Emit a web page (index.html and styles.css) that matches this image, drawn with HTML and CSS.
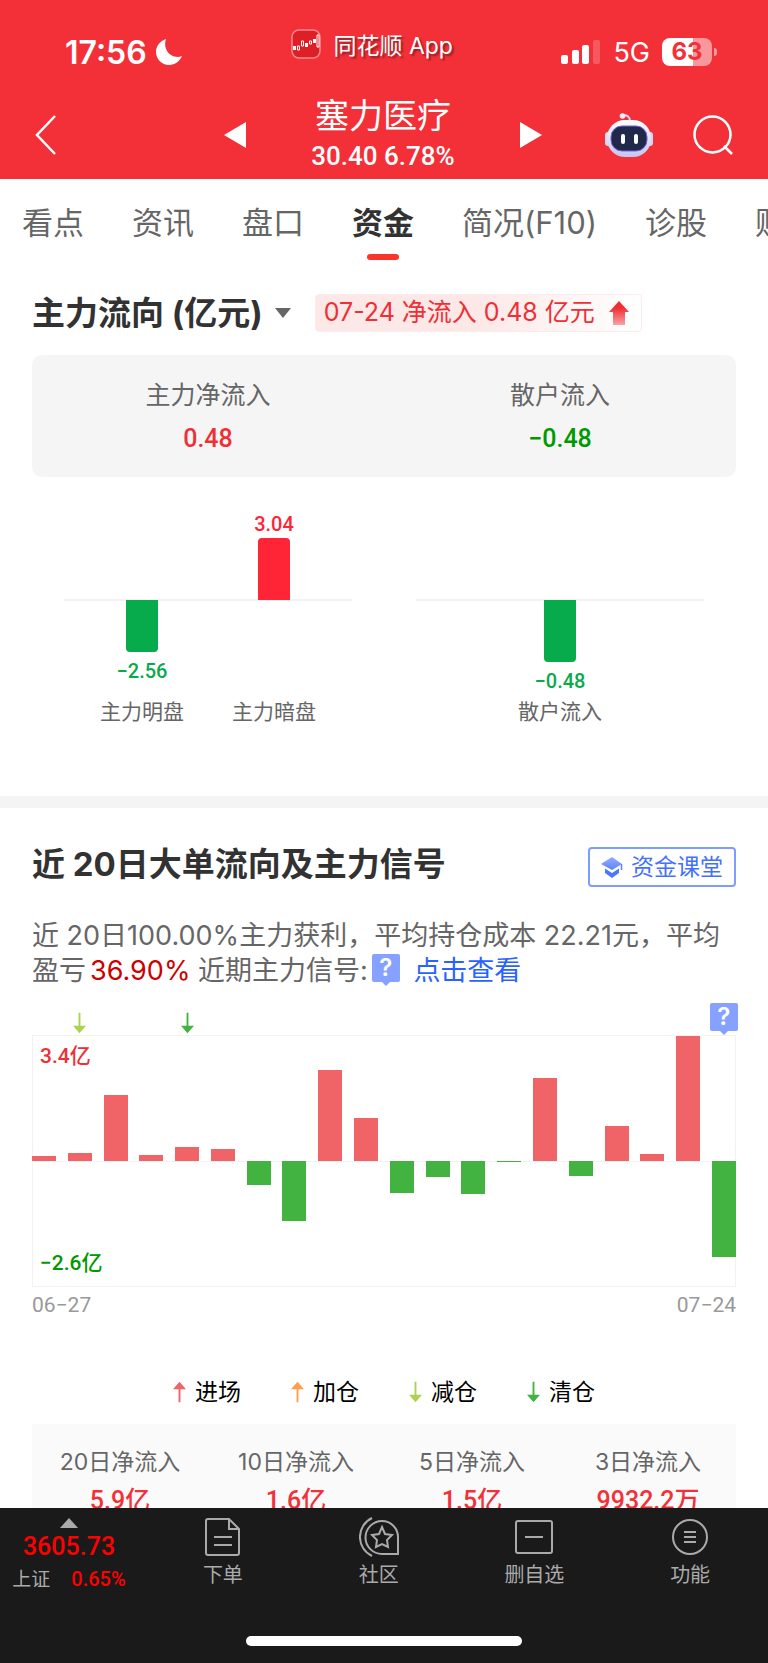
FILE: index.html
```html
<!DOCTYPE html>
<html lang="zh-CN">
<head>
  <meta charset="UTF-8">
  <meta name="viewport" content="width=device-width, initial-scale=1.0">
  <title>塞力医疗 - 资金</title>
  <link rel="stylesheet" href="styles.css">
</head>
<body>
  <!-- Arrow shapes used more than once -->
  <svg class="sprite" aria-hidden="true">
    <symbol id="arrow-down" viewBox="0 0 14 22"><path d="M6 0h2v14h6l-7 8-7-8h6z"/></symbol>
    <symbol id="arrow-up" viewBox="0 0 14 22"><path d="M6 22h2V8h6L7 0 0 8h6z"/></symbol>
  </svg>

  <header class="header">
    <div class="status">
      <div class="status-time">
        <span>17:56</span>
        <svg width="26" height="26" viewBox="0 0 26 26"><path d="M10 0C4 2 0 7 0 13c0 7 6 13 13 13 6 0 11-4 13-9-9 4-20-5-16-17z" fill="#fff"/></svg>
      </div>
      <div class="status-app">
        <svg width="30" height="30" viewBox="0 0 30 30">
          <rect x="1" y="1" width="28" height="28" rx="7" fill="#dd1f26" stroke="#fa8a8d" stroke-width="1.5"/>
          <path d="M2 17h3v4H2zM14 14h3v4h-3zM22 10h3v4h-3z" fill="#fff"/>
          <path d="M6.500 17h2v4h-2zM10.500 12h2v5h-2zM18.500 12h2v3h-2zM26 6h2v12h-2z" fill="none" stroke="#fff"/>
        </svg>
        <span>同花顺 App</span>
      </div>
      <div class="status-right">
        <svg width="40" height="26" viewBox="0 0 40 26" fill="#fff">
          <rect x="0" y="16" width="7" height="9" rx="2"/>
          <rect x="11" y="11" width="7" height="14" rx="2"/>
          <rect x="21" y="6" width="7" height="19" rx="2"/>
          <rect x="32" y="1" width="7" height="24" rx="2" opacity=".2"/>
        </svg>
        <span class="network">5G</span>
        <span class="battery">63</span>
      </div>
    </div>

    <nav class="titlebar">
      <button class="icon-btn back" aria-label="返回">
        <svg width="22" height="40" viewBox="0 0 22 40"><path d="M20 1 2 20l18 19" fill="none" stroke="#fff" stroke-width="2.500"/></svg>
      </button>
      <button class="icon-btn prev" aria-label="上一只">
        <svg width="22" height="26" viewBox="0 0 22 26"><path d="M22 0v26L0 13z" fill="#fff"/></svg>
      </button>
      <div class="stock">
        <h1>塞力医疗</h1>
        <p>30.40 6.78%</p>
      </div>
      <button class="icon-btn next" aria-label="下一只">
        <svg width="22" height="26" viewBox="0 0 22 26"><path d="M0 0v26l22-13z" fill="#fff"/></svg>
      </button>
      <div class="tools">
        <button class="icon-btn" aria-label="智能助手">
          <svg width="48" height="44" viewBox="0 0 48 44">
            <defs>
              <linearGradient id="head" x1="0" y1="0" x2="0" y2="1"><stop offset="0" stop-color="#fff"/><stop offset="1" stop-color="#c3c6ee"/></linearGradient>
            </defs>
            <path d="M17 2.500c5-1 8 1 8 6" fill="none" stroke="#d9d9f5" stroke-width="2"/>
            <circle cx="17.500" cy="3" r="2.800" fill="#eeeefc"/>
            <rect x="0" y="19" width="7" height="14" rx="3" fill="#d4d6f5"/>
            <rect x="41" y="19" width="7" height="14" rx="3" fill="#d4d6f5"/>
            <rect x="2" y="7" width="44" height="37" rx="18" fill="url(#head)"/>
            <rect x="6" y="13" width="36" height="25" rx="11" fill="#20294a" stroke="#7b5fe0" stroke-width="1"/>
            <rect x="16" y="21" width="4" height="10" rx="2" fill="#fff"/>
            <rect x="29" y="21" width="4" height="10" rx="2" fill="#fff"/>
          </svg>
        </button>
        <button class="icon-btn" aria-label="搜索">
          <svg width="40" height="40" viewBox="0 0 40 40" fill="none" stroke="#fff" stroke-width="2.500"><circle cx="19.500" cy="19.500" r="18"/><path d="m31 31 8 8"/></svg>
        </button>
      </div>
    </nav>
  </header>

  <nav class="tabs">
    <a href="#">看点</a>
    <a href="#">资讯</a>
    <a href="#">盘口</a>
    <a href="#" class="active">资金</a>
    <a href="#">简况(F10)</a>
    <a href="#">诊股</a>
    <a href="#">财务</a>
  </nav>

  <main>
    <section class="flow">
      <div class="flow-head">
        <h2>主力流向 (亿元)</h2>
        <button class="icon-btn caret" aria-label="切换单位">
          <svg width="16" height="10" viewBox="0 0 16 10"><path d="M0 0h16L8 10z" fill="#666"/></svg>
        </button>
        <p class="flow-tag">
          <span>07-24 净流入 0.48 亿元</span>
          <svg width="20" height="24" viewBox="0 0 20 24">
            <defs><linearGradient id="up" x1="0" y1="0" x2="0" y2="1"><stop offset=".3" stop-color="#ee3035"/><stop offset="1" stop-color="#f8a3a6"/></linearGradient></defs>
            <path d="M10 0 20 11h-4v13H4V11H0z" fill="url(#up)"/>
          </svg>
        </p>
      </div>

      <dl class="summary">
        <div><dt>主力净流入</dt><dd class="up">0.48</dd></div>
        <div><dt>散户流入</dt><dd class="down">−0.48</dd></div>
      </dl>

      <div class="mini-charts">
        <div class="mini">
          <div class="mini-col">
            <div class="above"></div>
            <div class="below"><i style="height:52px"></i><b>−2.56</b></div>
            <span>主力明盘</span>
          </div>
          <div class="mini-col">
            <div class="above"><b>3.04</b><i style="height:62px"></i></div>
            <div class="below"></div>
            <span>主力暗盘</span>
          </div>
        </div>
        <div class="mini">
          <div class="mini-col">
            <div class="above"></div>
            <div class="below"><i style="height:62px"></i><b>−0.48</b></div>
            <span>散户流入</span>
          </div>
        </div>
      </div>
    </section>

    <section class="signal">
      <div class="signal-head">
        <h2>近 20日大单流向及主力信号</h2>
        <button class="lesson">
          <svg width="22" height="22" viewBox="0 0 22 22">
            <defs><linearGradient id="cap" x1="0" y1="0" x2="0" y2="1"><stop offset="0" stop-color="#93adff"/><stop offset="1" stop-color="#5c83ff"/></linearGradient></defs>
            <path d="M11 1 21 8l-10 6L0 8z" fill="url(#cap)"/>
            <path d="M4 12.500 11 17l7-4.500V17l-7 5-7-5z" fill="#4b78fa"/>
            <path d="M20.500 8v6" stroke="#5c83ff" stroke-width="1.500"/>
          </svg>
          资金课堂
        </button>
      </div>

      <p class="desc">近 20日100.00%主力获利，平均持仓成本 22.21元，平均盈亏<em>36.90%</em> 近期主力信号:<button class="help" aria-label="说明">?</button> <a href="#">点击查看</a></p>

      <div class="marks" id="marks"></div>
      <div class="chart">
        <span class="max">3.4亿</span>
        <span class="min">−2.6亿</span>
        <div class="bars" id="bars"></div>
      </div>
      <div class="dates"><span>06−27</span><span>07−24</span></div>

      <ul class="legend">
        <li><svg class="enter"><use href="#arrow-up"/></svg>进场</li>
        <li><svg class="add"><use href="#arrow-up"/></svg>加仓</li>
        <li><svg class="reduce"><use href="#arrow-down"/></svg>减仓</li>
        <li><svg class="clear"><use href="#arrow-down"/></svg>清仓</li>
      </ul>

      <table class="totals">
        <thead>
          <tr><th>20日净流入</th><th>10日净流入</th><th>5日净流入</th><th>3日净流入</th></tr>
        </thead>
        <tbody>
          <tr><td>5.9亿</td><td>1.6亿</td><td>1.5亿</td><td>9932.2万</td></tr>
        </tbody>
      </table>
    </section>
  </main>

  <footer class="footer">
    <div class="footer-row">
      <button class="index">
        <svg width="18" height="10" viewBox="0 0 18 10"><path d="M9 0l9 10H0z" fill="#aaa"/></svg>
        <strong>3605.73</strong>
        <span class="index-row"><span>上证</span><span class="pct">0.65%</span></span>
      </button>
      <a href="#" class="item">
        <svg width="40" height="40" viewBox="0 0 40 40"><path d="M5 2h21l10 10v24q0 2-2 2H5q-2 0-2-2V4q0-2 2-2zM26 2v10h10M11 20h18M11 28h18"/></svg>
        下单
      </a>
      <a href="#" class="item">
        <svg width="40" height="40" viewBox="0 0 40 40"><path d="M23 4a16 16 0 1 0 0 33h16V20A16 16 0 0 0 23 4zM13 1a21 21 0 0 0 0 38"/><path d="m23 10 3 7 7 1-5 5 1 7-6-3-6 3 1-7-5-5 7-1z"/></svg>
        社区
      </a>
      <a href="#" class="item">
        <svg width="40" height="40" viewBox="0 0 40 40"><rect x="2" y="4" width="36" height="32" rx="2"/><path d="M11 20h18"/></svg>
        删自选
      </a>
      <a href="#" class="item">
        <svg width="40" height="40" viewBox="0 0 40 40"><circle cx="20" cy="20" r="17"/><path d="M14 15h12M14 20h12M14 25h12"/></svg>
        功能
      </a>
    </div>
    <div class="home"></div>
  </footer>

  <script>
    // bar heights per trading day, in px from the zero line
    const flow = [5, 8, 66, 6, 14, 12, -24, -60, 91, 43, -32, -16, -33, -1, 83, -15, 35, 7, 125, -96];
    const marks = { 1: 'reduce', 4: 'clear', 19: 'help' };

    document.getElementById('bars').innerHTML = flow.map(v =>
      `<i class="${v > 0 ? 'pos' : 'neg'}" style="height:${Math.abs(v)}px"></i>`
    ).join('');

    document.getElementById('marks').innerHTML = flow.map((v, i) => {
      if (!marks[i]) return '<span></span>';
      if (marks[i] === 'help') return '<span><button class="help" aria-label="说明">?</button></span>';
      return `<span><svg class="${marks[i]}"><use href="#arrow-down"/></svg></span>`;
    }).join('');
  </script>
</body>
</html>
```
FILE: styles.css
```css
* {
  box-sizing: border-box;
}
body {
  margin: 0;
  background: #fff;
  color: #323232;
  font-family: Inter, "Noto Sans CJK SC", sans-serif;
  overflow-x: hidden;
}
h1, h2, p, dl, dd, ul {
  margin: 0;
  padding: 0;
}
button {
  font-family: inherit;
  border: 0;
  padding: 0;
  background: none;
  cursor: pointer;
}
a {
  text-decoration: none;
  color: inherit;
}
svg {
  display: block;
  flex: none;
}
.sprite {
  width: 0;
  height: 0;
  position: absolute;
}

/* header */
.header {
  background: #f33038;
  color: #fff;
  height: 179px;
  padding-top: 27px;
}
.status {
  display: grid;
  grid-template-columns: 35% auto 1fr;
  align-items: center;
  height: 48px;
  padding: 0 56px 0 65px;
}
.status-time {
  display: flex;
  align-items: center;
  gap: 9px;
  font-size: 32px;
  font-weight: 600;
}
.status-app {
  display: flex;
  align-items: center;
  gap: 12px;
  padding-bottom: 16px;
  font-size: 23px;
  text-shadow: 2px 2px 2px rgba(0,0,0,0.4);
}
.status-right {
  display: flex;
  align-items: center;
  justify-content: flex-end;
  gap: 12px;
}
.network {
  font-size: 27px;
}
.battery {
  position: relative;
  width: 50px;
  height: 28px;
  line-height: 28px;
  border-radius: 8px;
  text-align: center;
  font-size: 24px;
  font-weight: 700;
  color: #f33038;
  background: linear-gradient(90deg, #fff 63%, #f9989c 63%);
}
.battery::after {
  content: "";
  position: absolute;
  right: -5px;
  top: 10px;
  width: 3px;
  height: 8px;
  border-radius: 0 3px 3px 0;
  background: #f9989c;
}
.titlebar {
  display: grid;
  grid-template-columns: 1fr auto 148px auto 1fr;
  align-items: center;
  gap: 63px;
  height: 101px;
  padding: 19px 35px 0;
}
.stock {
  white-space: nowrap;
  text-align: center;
}
.stock h1 {
  font-size: 34px;
  line-height: 42px;
  font-weight: 400;
}
.stock p {
  font: 500 26px/38px Roboto, sans-serif;
}
.tools {
  display: flex;
  align-items: center;
  justify-content: flex-end;
  gap: 40px;
}

/* tabs */
.tabs {
  display: flex;
  gap: 48px;
  height: 96px;
  padding: 20px 22px 0;
  overflow: hidden;
  white-space: nowrap;
  font-size: 31px;
  line-height: 48px;
  color: #666;
}
.tabs a {
  flex: none;
}
.tabs .active {
  color: #323232;
  font-weight: 700;
}
.tabs .active::after {
  content: "";
  display: block;
  width: 32px;
  height: 6px;
  margin: 7px auto 0;
  border-radius: 3px;
  background: #fc352c;
}

/* main capital flow */
.flow {
  padding: 14px 32px 69px;
}
.flow-head {
  display: flex;
  align-items: center;
  height: 48px;
}
h2 {
  font-size: 33px;
  line-height: 48px;
  font-weight: 700;
  white-space: nowrap;
}
.caret {
  margin: 0 24px 0 12px;
}
.flow-tag {
  display: flex;
  align-items: center;
  gap: 14px;
  height: 38px;
  padding: 0 12px 0 8px;
  border: 1px solid #fdeaea;
  border-radius: 4px;
  background: linear-gradient(90deg, #fde8e8 50%, #fff);
  color: #ee3035;
  font-size: 25px;
  line-height: 32px;
  white-space: nowrap;
}
.flow-tag span {
  padding-bottom: 2px;
}
.summary {
  display: flex;
  margin-top: 18px;
  padding: 21px 0 13px;
  border-radius: 10px;
  background: #f5f5f5;
}
.summary div {
  flex: 1;
  text-align: center;
}
.summary dt {
  font-size: 25px;
  line-height: 38px;
  color: #666;
}
.summary dd {
  font: 500 25px/50px Roboto, sans-serif;
}
.up {
  color: #ee3035;
}
.down {
  color: #009900;
}
.mini-charts {
  display: flex;
  gap: 64px;
  padding: 0 32px;
}
.mini {
  flex: 1;
  display: flex;
  justify-content: center;
  gap: 48px;
  background: linear-gradient(#f2f2f2, #f2f2f2) 0 122px / 100% 2px no-repeat;
}
.mini-col {
  display: flex;
  flex-direction: column;
  align-items: center;
  width: 84px;
  color: #666;
  font-size: 21px;
  line-height: 30px;
}
.mini-col span {
  white-space: nowrap;
}
.mini-col b {
  font: 500 20px/28px Roboto, sans-serif;
}
.above, .below {
  display: flex;
  flex-direction: column;
  align-items: center;
}
.above {
  height: 123px;
  justify-content: flex-end;
  color: #ff2436;
}
.below {
  height: 97px;
  color: #08ab4b;
}
.mini-col i {
  width: 32px;
  background: currentColor;
}
.above i {
  border-radius: 4px 4px 0 0;
}
.below i {
  border-radius: 0 0 4px 4px;
  margin-bottom: 5px;
}

/* 20-day signal */
.signal {
  border-top: 12px solid #f4f4f4;
  padding: 32px 32px 0;
}
.signal-head {
  display: flex;
  justify-content: space-between;
  align-items: center;
}
.lesson {
  display: flex;
  align-items: center;
  gap: 8px;
  height: 40px;
  padding: 0 11px;
  margin-top: 6px;
  border: 2px solid #7f9dff;
  border-radius: 4px;
  color: #4470ff;
  font-size: 23px;
  line-height: 32px;
}
.desc {
  margin-top: 30px;
  font-size: 27px;
  line-height: 35px;
  color: #666;
}
.desc em {
  font-style: normal;
  color: #cc0000;
  margin-left: 4px;
}
.desc a {
  color: #2a62ff;
  margin-left: 6px;
}
.help {
  position: relative;
  width: 28px;
  height: 28px;
  border-radius: 2px;
  background: #86a1ff;
  color: #fff;
  font-size: 24px;
  font-weight: 600;
  line-height: 28px;
}
.help::after {
  content: "";
  position: absolute;
  left: 10px;
  top: 28px;
  border: 4px solid transparent;
  border-top-color: #86a1ff;
  border-bottom: 0;
}
.desc .help {
  margin-left: 4px;
  vertical-align: 4px;
}
.marks {
  display: flex;
  justify-content: space-between;
  align-items: flex-end;
  height: 47px;
  padding-bottom: 1px;
}
.marks span {
  display: flex;
  justify-content: center;
  width: 24px;
}
.marks .help {
  flex: none;
  margin-bottom: 3px;
}
.marks svg, .legend svg {
  width: 13px;
  height: 22px;
}
.enter { fill: #f06467; }
.add { fill: #ff9d4d; }
.reduce { fill: #acd34f; }
.clear { fill: #42b341; }
.chart {
  position: relative;
  height: 252px;
  background: linear-gradient(#f2f2f2, #f2f2f2) 0 126px / 100% 1px no-repeat;
  box-shadow: inset 0 0 0 1px #f2f2f2;
}
.bars {
  display: flex;
  justify-content: space-between;
  align-items: flex-start;
  height: 252px;
}
.bars i {
  width: 24px;
}
.pos {
  background: #f06467;
  align-self: flex-end;
  margin-bottom: 126px;
}
.neg {
  background: #42b341;
  margin-top: 126px;
}
.max, .min {
  position: absolute;
  left: 8px;
  font: 500 21px/30px Roboto, "Noto Sans CJK SC", sans-serif;
}
.max {
  top: 6px;
  color: #ee3035;
}
.min {
  bottom: 9px;
  color: #009900;
}
.dates {
  display: flex;
  justify-content: space-between;
  font: 400 21px/36px Roboto, sans-serif;
  color: #999;
}
.legend {
  display: flex;
  justify-content: center;
  gap: 50px;
  margin-top: 51px;
  list-style: none;
  font-size: 23px;
  line-height: 36px;
  color: #000;
}
.legend li {
  display: flex;
  align-items: center;
  gap: 9px;
}
.totals {
  width: 100%;
  margin-top: 14px;
  border-collapse: collapse;
  table-layout: fixed;
  background: #fafafa;
}
.totals th {
  padding: 20px 0 0;
  font-size: 23px;
  line-height: 36px;
  font-weight: 400;
  color: #666;
}
.totals td {
  padding: 0 0 20px;
  text-align: center;
  font: 500 25px/42px Roboto, "Noto Sans CJK SC", sans-serif;
  color: #f33038;
}

/* bottom bar */
.footer {
  position: fixed;
  left: 0;
  right: 0;
  bottom: 0;
  height: 155px;
  background: #1a1a1a;
  color: #aaa;
}
.footer-row {
  display: flex;
  height: 128px;
}
.index {
  display: flex;
  flex-direction: column;
  align-items: center;
  width: 145px;
  padding: 10px 7px 0 0;
  color: #aaa;
}
.index strong {
  font: 500 25px/38px Roboto, sans-serif;
  color: #ff0000;
}
.index-row {
  display: flex;
  gap: 21px;
  font-size: 19px;
  line-height: 28px;
}
.pct {
  font: 500 20px/26px Roboto, sans-serif;
  color: #ff0000;
}
.item {
  flex: 1;
  display: flex;
  flex-direction: column;
  align-items: center;
  gap: 4px;
  padding-top: 9px;
  font-size: 20px;
  line-height: 28px;
}
.item svg {
  fill: none;
  stroke: #aaa;
  stroke-width: 2;
}
.home {
  width: 36%;
  height: 10px;
  margin: 0 auto;
  border-radius: 5px;
  background: #fff;
}
```
